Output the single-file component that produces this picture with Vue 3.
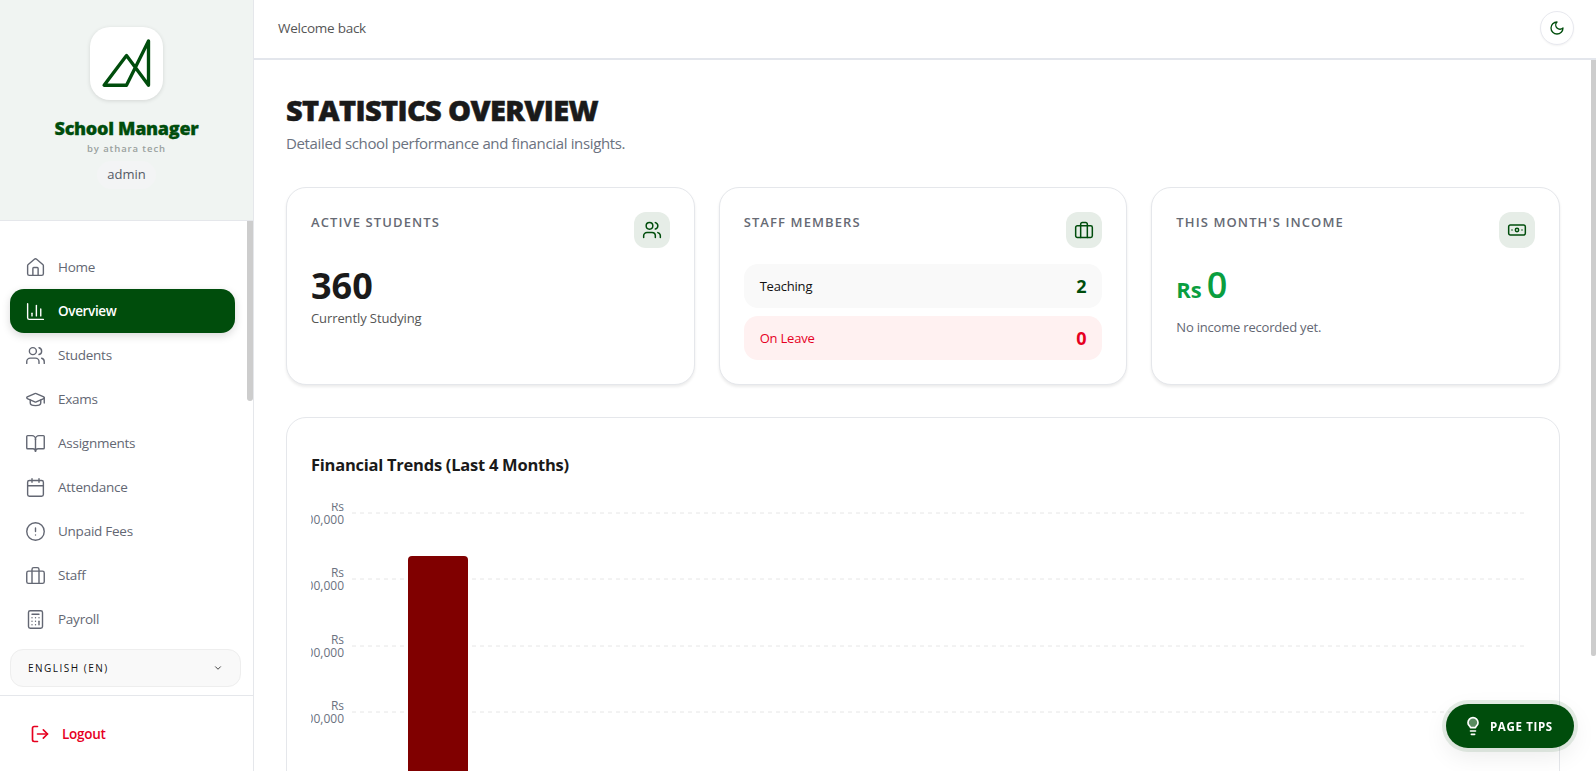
<script setup>
// lucide-style icon bodies, drawn inside a 24x24 box
const icons = {
  home: '<path d="M15 21v-8a1 1 0 0 0-1-1h-4a1 1 0 0 0-1 1v8"/><path d="M3 10a2 2 0 0 1 .709-1.528l7-5.999a2 2 0 0 1 2.582 0l7 5.999A2 2 0 0 1 21 10v9a2 2 0 0 1-2 2H5a2 2 0 0 1-2-2z"/>',
  chart: '<path d="M3 3v16a2 2 0 0 0 2 2h16"/><path d="M8 17v-3"/><path d="M13 17V5"/><path d="M18 17V9"/>',
  users: '<path d="M16 21v-2a4 4 0 0 0-4-4H6a4 4 0 0 0-4 4v2"/><circle cx="9" cy="7" r="4"/><path d="M22 21v-2a4 4 0 0 0-3-3.87"/><path d="M16 3.13a4 4 0 0 1 0 7.75"/>',
  cap: '<path d="M21.42 10.922a1 1 0 0 0-.019-1.838L12.83 5.18a2 2 0 0 0-1.66 0L2.6 9.08a1 1 0 0 0 0 1.832l8.57 3.908a2 2 0 0 0 1.66 0z"/><path d="M22 10v6"/><path d="M6 12.5V16a6 3 0 0 0 12 0v-3.5"/>',
  book: '<path d="M12 7v14"/><path d="M3 18a1 1 0 0 1-1-1V4a1 1 0 0 1 1-1h5a4 4 0 0 1 4 4 4 4 0 0 1 4-4h5a1 1 0 0 1 1 1v13a1 1 0 0 1-1 1h-6a3 3 0 0 0-3 3 3 3 0 0 0-3-3z"/>',
  calendar: '<path d="M8 2v4"/><path d="M16 2v4"/><rect x="3" y="4" width="18" height="18" rx="2"/><path d="M3 10h18"/>',
  alert: '<circle cx="12" cy="12" r="10"/><path d="M12 8v4"/><path d="M12 16h.01"/>',
  briefcase: '<rect x="2" y="7" width="20" height="14" rx="2"/><path d="M16 21V5a2 2 0 0 0-2-2h-4a2 2 0 0 0-2 2v16"/>',
  calculator: '<rect x="4" y="2" width="16" height="20" rx="2"/><path d="M8 6h8"/><path d="M16 14v4"/><path d="M16 10h.01"/><path d="M12 10h.01"/><path d="M8 10h.01"/><path d="M12 14h.01"/><path d="M8 14h.01"/><path d="M12 18h.01"/><path d="M8 18h.01"/>',
  logout: '<path d="M9 21H5a2 2 0 0 1-2-2V5a2 2 0 0 1 2-2h4"/><path d="m16 17 5-5-5-5"/><path d="M21 12H9"/>',
  moon: '<path d="M12 3a6 6 0 0 0 9 9 9 9 0 1 1-9-9Z"/>',
  banknote: '<rect x="2" y="6" width="20" height="12" rx="2"/><circle cx="12" cy="12" r="2"/><path d="M6 12h.01M18 12h.01"/>',
  bulb: '<path fill="rgba(255,255,255,0.35)" d="M15 14c.2-1 .7-1.7 1.5-2.5 1-.9 1.5-2.2 1.5-3.5A6 6 0 0 0 6 8c0 1 .2 2.2 1.5 3.5.7.7 1.3 1.5 1.5 2.5z"/><path d="M9 18h6"/><path d="M10 22h4"/>',
  chevron: '<path d="m6 9 6 6 6-6"/>'
}

const navItems = [
  { label: 'Home', icon: 'home' },
  { label: 'Overview', icon: 'chart', active: true },
  { label: 'Students', icon: 'users' },
  { label: 'Exams', icon: 'cap' },
  { label: 'Assignments', icon: 'book' },
  { label: 'Attendance', icon: 'calendar' },
  { label: 'Unpaid Fees', icon: 'alert' },
  { label: 'Staff', icon: 'briefcase' },
  { label: 'Payroll', icon: 'calculator' }
]

// chart ticks, y is relative to the top of the svg
const ticks = [
  { y: 10, value: '400,000' },
  { y: 76, value: '300,000' },
  { y: 143, value: '200,000' },
  { y: 209, value: '100,000' }
]
</script>

<template>
  <div class="app">
    <aside class="sidebar">
      <div class="brand">
        <div class="logo">
          <svg width="73" height="73" viewBox="0 0 74 74" fill="none" stroke="#004d0c" stroke-width="3.4" stroke-linejoin="round" stroke-linecap="round">
            <path d="M14.3 59H37L59.3 14.3V59L37 29Z" />
          </svg>
        </div>
        <div class="brand-name">School Manager</div>
        <div class="brand-by">by athara tech</div>
        <div class="brand-user">admin</div>
      </div>

      <div class="nav-wrap">
        <nav class="nav">
          <a v-for="item in navItems" :key="item.label" class="nav-item" :class="{ active: item.active }">
            <svg class="nav-icon" viewBox="0 0 24 24" fill="none" stroke="currentColor" stroke-width="1.6" stroke-linecap="round" stroke-linejoin="round" v-html="icons[item.icon]"></svg>
            <span>{{ item.label }}</span>
          </a>
        </nav>
        <div class="nav-thumb"></div>
      </div>

      <div class="lang">
        <span>ENGLISH (EN)</span>
        <svg width="10" height="10" viewBox="0 0 24 24" fill="none" stroke="#444" stroke-width="2.4" stroke-linecap="round" stroke-linejoin="round" v-html="icons.chevron"></svg>
      </div>

      <div class="logout-row">
        <a class="logout">
          <svg width="20" height="20" viewBox="0 0 24 24" fill="none" stroke="currentColor" stroke-width="2" stroke-linecap="round" stroke-linejoin="round" v-html="icons.logout"></svg>
          <span>Logout</span>
        </a>
      </div>
    </aside>

    <div class="main">
      <header class="topbar">
        <span class="welcome">Welcome back</span>
        <button class="theme-btn">
          <svg width="16" height="16" viewBox="0 0 24 24" fill="none" stroke="#004d0c" stroke-width="2" stroke-linecap="round" stroke-linejoin="round" v-html="icons.moon"></svg>
        </button>
      </header>

      <div class="content-wrap">
        <main class="content">
          <h1 class="page-title">STATISTICS OVERVIEW</h1>
          <p class="page-sub">Detailed school performance and financial insights.</p>

          <section class="cards">
            <div class="card">
              <div class="card-head">
                <span class="card-label">ACTIVE STUDENTS</span>
                <span class="card-icon"><svg width="20" height="20" viewBox="0 0 24 24" fill="none" stroke="currentColor" stroke-width="1.8" stroke-linecap="round" stroke-linejoin="round" v-html="icons.users"></svg></span>
              </div>
              <div class="big-num">360</div>
              <div class="card-note dark">Currently Studying</div>
            </div>

            <div class="card">
              <div class="card-head">
                <span class="card-label">STAFF MEMBERS</span>
                <span class="card-icon"><svg width="20" height="20" viewBox="0 0 24 24" fill="none" stroke="currentColor" stroke-width="1.8" stroke-linecap="round" stroke-linejoin="round" v-html="icons.briefcase"></svg></span>
              </div>
              <div class="staff-rows">
                <div class="staff-row">
                  <span>Teaching</span>
                  <b>2</b>
                </div>
                <div class="staff-row leave">
                  <span>On Leave</span>
                  <b>0</b>
                </div>
              </div>
            </div>

            <div class="card">
              <div class="card-head">
                <span class="card-label">THIS MONTH'S INCOME</span>
                <span class="card-icon"><svg width="20" height="20" viewBox="0 0 24 24" fill="none" stroke="currentColor" stroke-width="1.8" stroke-linecap="round" stroke-linejoin="round" v-html="icons.banknote"></svg></span>
              </div>
              <div class="income"><span class="income-cur">Rs</span><span class="income-val">0</span></div>
              <div class="card-note">No income recorded yet.</div>
            </div>
          </section>

          <section class="chart-card">
            <h2 class="chart-title">Financial Trends (Last 4 Months)</h2>
            <svg class="chart" width="1224" height="300" viewBox="0 0 1224 300">
              <g v-for="t in ticks" :key="t.y">
                <line x1="41" x2="1216" :y1="t.y" :y2="t.y" stroke="#e6e6e6" stroke-dasharray="4 4" />
                <text x="33" :y="t.y - 2" text-anchor="end" class="tick">Rs</text>
                <text x="33" :y="t.y + 11" text-anchor="end" class="tick">{{ t.value }}</text>
              </g>
              <path d="M97 300V57a4 4 0 0 1 4-4h52a4 4 0 0 1 4 4v243z" fill="#800000" />
            </svg>
          </section>
        </main>
        <div class="page-thumb"></div>
      </div>
    </div>

    <button class="tips">
      <svg width="20" height="20" viewBox="0 0 24 24" fill="none" stroke="currentColor" stroke-width="2" stroke-linecap="round" stroke-linejoin="round" v-html="icons.bulb"></svg>
      <span>PAGE TIPS</span>
    </button>
  </div>
</template>

<style>
html, body {
  margin: 0;
  height: 100%;
  overflow: hidden;
}
</style>

<style scoped>
.app {
  display: flex;
  height: 771px;
  overflow: hidden;
  background: #fff;
  font-family: "Open Sans", "Noto Sans", sans-serif;
  color: #1a1a1a;
}

/* sidebar */
.sidebar {
  width: 253px;
  flex-shrink: 0;
  display: flex;
  flex-direction: column;
  border-right: 1px solid #e5e7eb;
}

.brand {
  height: 221px;
  box-sizing: border-box;
  padding-top: 27px;
  background: #f0f4f2;
  border-bottom: 1px solid #e5e7eb;
  display: flex;
  flex-direction: column;
  align-items: center;
}

.logo {
  width: 73px;
  height: 73px;
  background: #fff;
  border-radius: 20px;
  box-shadow: 0 1px 4px rgba(0, 0, 0, 0.12);
}

.brand-name {
  margin-top: 14px;
  font-size: 18px;
  line-height: 28px;
  font-weight: 800;
  letter-spacing: -0.3px;
  -webkit-text-stroke: 0.3px #004d0c;
  color: #004d0c;
}

.brand-by {
  margin-top: 1px;
  font-size: 9.5px;
  line-height: 12px;
  letter-spacing: 0.9px;
  color: #9aa19e;
  font-weight: 600;
}

.brand-user {
  margin-top: 6px;
  padding: 0 10px;
  height: 28px;
  line-height: 27px;
  font-size: 13px;
  color: #555a66;
  background: #f3f4f5;
  border-radius: 14px;
}

.nav-wrap {
  position: relative;
  height: 428px;
  flex-shrink: 0;
}

.nav {
  padding: 24px 18px 0 10px;
  display: flex;
  flex-direction: column;
}

.nav-item {
  height: 44px;
  display: flex;
  align-items: center;
  gap: 12px;
  padding-left: 15px;
  border-radius: 14px;
  font-size: 13.5px;
  font-weight: 500;
  letter-spacing: -0.25px;
  color: #636773;
}

.nav-item.active {
  background: #004d0c;
  color: #fff;
  font-weight: 600;
  letter-spacing: -0.35px;
  box-shadow: 0 3px 8px rgba(0, 0, 0, 0.15);
}

.nav-icon {
  width: 21px;
  height: 21px;
  flex-shrink: 0;
}

.nav-thumb {
  position: absolute;
  top: 0;
  right: 0;
  width: 6px;
  height: 180px;
  background: #cdcdcd;
  border-radius: 0 0 3px 3px;
}

.lang {
  margin: 0 12px 0 10px;
  height: 38px;
  box-sizing: border-box;
  padding: 0 17px;
  display: flex;
  align-items: center;
  justify-content: space-between;
  background: #f9f9f9;
  border: 1px solid #eeeeee;
  border-radius: 13px;
  font-size: 10px;
  font-weight: 500;
  letter-spacing: 1.5px;
  color: #111;
}

.logout-row {
  margin-top: 8px;
  border-top: 1px solid #e5e7eb;
  padding: 28px 0 0 30px;
}

.logout {
  display: flex;
  align-items: center;
  gap: 12px;
  height: 20px;
  font-size: 13.5px;
  font-weight: 600;
  letter-spacing: -0.25px;
  color: #e6001f;
}

/* main column */
.main {
  flex: 1;
  min-width: 0;
  display: flex;
  flex-direction: column;
}

.topbar {
  height: 56px;
  flex-shrink: 0;
  display: flex;
  align-items: center;
  justify-content: space-between;
  padding: 0 22px 2px 24px;
  border-bottom: 2px solid #e3e6ec;
}

.welcome {
  font-size: 13.5px;
  font-weight: 500;
  letter-spacing: -0.25px;
  color: #555;
}

.theme-btn {
  width: 34px;
  height: 34px;
  display: flex;
  align-items: center;
  justify-content: center;
  padding: 0;
  background: #fff;
  border: 1px solid #e8e9ef;
  border-radius: 50%;
  box-shadow: 0 1px 2px rgba(0, 0, 0, 0.05);
}

.content-wrap {
  flex: 1;
  min-height: 0;
  position: relative;
  overflow: hidden;
}

.content {
  padding: 33px 36px 0 32px;
}

.page-title {
  margin: 0;
  font-size: 29px;
  line-height: 34px;
  font-weight: 800;
  letter-spacing: -0.65px;
  -webkit-text-stroke: 0.5px #1a1a1a;
  color: #1a1a1a;
}

.page-sub {
  margin: 4px 0 0;
  font-size: 15px;
  line-height: 24px;
  letter-spacing: -0.35px;
  color: #6b7280;
}

.cards {
  margin-top: 32px;
  display: grid;
  grid-template-columns: repeat(3, 1fr);
  gap: 24px;
}

.card {
  height: 198px;
  box-sizing: border-box;
  padding: 24px;
  background: #fff;
  border: 1px solid #e5e7eb;
  border-radius: 20px;
  box-shadow: 0 2px 3px rgba(0, 0, 0, 0.08);
}

.card-head {
  display: flex;
  justify-content: space-between;
  align-items: flex-start;
}

.card-label {
  font-size: 13px;
  line-height: 20px;
  font-weight: 600;
  letter-spacing: 1.1px;
  color: #666a74;
}

.card-icon {
  width: 36px;
  height: 36px;
  display: flex;
  align-items: center;
  justify-content: center;
  background: #e6ede7;
  border-radius: 12px;
  color: #004d0c;
}

.big-num {
  margin-top: 16px;
  font-size: 36px;
  line-height: 44px;
  font-weight: 700;
  color: #1a1a1a;
}

.card-note {
  margin-top: 10px;
  font-size: 13px;
  line-height: 20px;
  letter-spacing: -0.2px;
  color: #636773;
}

.card-note.dark {
  color: #555;
  font-weight: 500;
  letter-spacing: -0.1px;
  margin-top: 0;
}

.staff-rows {
  margin-top: 16px;
  display: flex;
  flex-direction: column;
  gap: 8px;
}

.staff-row {
  height: 44px;
  padding: 0 16px;
  display: flex;
  align-items: center;
  justify-content: space-between;
  background: #f9f9f9;
  border-radius: 14px;
  font-size: 13px;
  font-weight: 500;
  letter-spacing: -0.2px;
  color: #111;
}

.staff-row b {
  font-size: 18px;
  font-weight: 700;
  color: #004d0c;
}

.staff-row.leave {
  background: #fff1f1;
  color: #e6001f;
}

.staff-row.leave b {
  color: #e6001f;
}

.income {
  margin-top: 15px;
  height: 44px;
  display: flex;
  align-items: baseline;
  gap: 5px;
  color: #0a9e3f;
}

.income-cur {
  font-size: 22px;
  font-weight: 700;
}

.income-val {
  font-size: 36px;
  font-weight: 600;
  line-height: 44px;
}

.chart-card {
  margin-top: 32px;
  height: 500px;
  box-sizing: border-box;
  padding: 24px;
  background: #fff;
  border: 1px solid #e5e7eb;
  border-radius: 20px;
}

.chart-title {
  margin: 0;
  font-size: 16.5px;
  line-height: 46px;
  font-weight: 700;
  letter-spacing: -0.25px;
  color: #1a1a1a;
}

.chart {
  display: block;
  margin-top: 15px;
  overflow: hidden;
}

.tick {
  font-size: 12px;
  fill: #6b7280;
}

.page-thumb {
  position: absolute;
  top: 0;
  right: 0;
  width: 5px;
  height: 596px;
  background: #cdcdcd;
  border-radius: 0 0 2px 2px;
}

.tips {
  position: fixed;
  left: 1446px;
  top: 704px;
  width: 128px;
  height: 44px;
  display: flex;
  align-items: center;
  gap: 7px;
  padding: 0 0 0 17px;
  background: #004d0c;
  border: none;
  border-radius: 22px;
  box-shadow: 0 0 0 4px rgba(0, 77, 12, 0.1), 0 8px 24px rgba(0, 0, 0, 0.08);
  color: #fff;
  font-family: inherit;
  font-size: 11.5px;
  font-weight: 700;
  letter-spacing: 0.65px;
}
</style>
